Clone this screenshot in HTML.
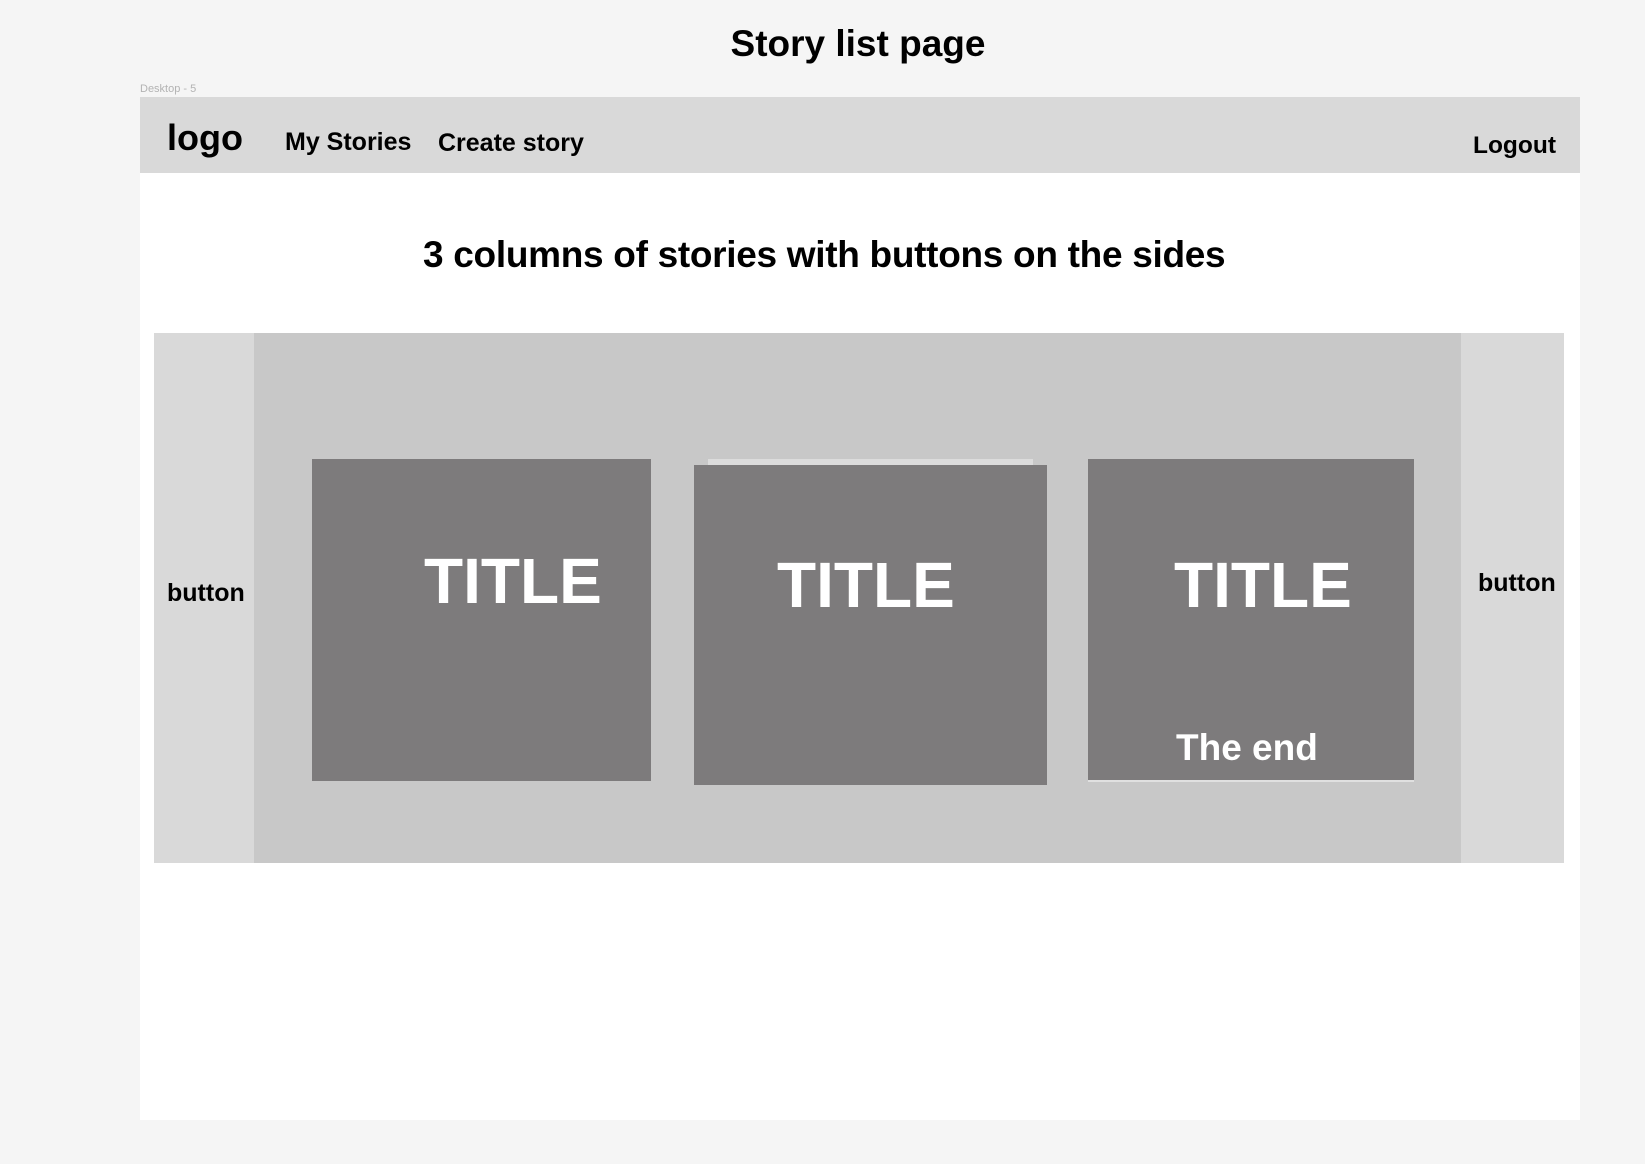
<!DOCTYPE html>
<html><head><meta charset="utf-8"><style>
body{margin:0;width:1645px;height:1164px;background:#f5f5f5;position:relative;overflow:hidden;font-family:"Liberation Sans",Arial,sans-serif;font-weight:bold;color:#000}
div{position:absolute}
.t{white-space:nowrap;line-height:1}
</style></head><body>
<div class="t" style="left:0;width:1716px;text-align:center;top:25px;font-size:37px">Story list page</div>
<div class="t" style="left:140px;top:84px;font-size:11px;font-weight:normal;color:#b3b3b3">Desktop - 5</div>
<div style="left:140px;top:97px;width:1440px;height:1023px;background:#fff"></div>
<div style="left:140px;top:97px;width:1440px;height:76px;background:#d9d9d9"></div>
<div class="t" style="left:167px;top:120px;font-size:36px">logo</div>
<div class="t" style="left:285px;top:130px;font-size:25px">My Stories</div>
<div class="t" style="left:438px;top:131px;font-size:25px">Create story</div>
<div class="t" style="left:1473px;top:134px;font-size:24.5px">Logout</div>
<div class="t" style="left:423px;top:236px;font-size:37px;letter-spacing:-0.3px">3 columns of stories with buttons on the sides</div>
<div style="left:154px;top:333px;width:1410px;height:530px;background:#d9d9d9"></div>
<div style="left:254px;top:333px;width:1207px;height:530px;background:#c8c8c8"></div>
<div class="t" style="left:167px;top:581px;font-size:25px">button</div>
<div class="t" style="left:1478px;top:571px;font-size:25px">button</div>
<div style="left:312px;top:459px;width:339px;height:322px;background:#7d7b7c"></div>
<div style="left:708px;top:459px;width:325px;height:6px;background:#dcdcdc"></div>
<div style="left:694px;top:465px;width:353px;height:320px;background:#7d7b7c"></div>
<div style="left:1088px;top:459px;width:326px;height:321px;background:#7d7b7c;border-bottom:2px solid #e0e0e0"></div>
<div class="t" style="left:424px;top:549px;font-size:64px;color:#fff">TITLE</div>
<div class="t" style="left:777px;top:553px;font-size:64px;color:#fff">TITLE</div>
<div class="t" style="left:1174px;top:553px;font-size:64px;color:#fff">TITLE</div>
<div class="t" style="left:1176px;top:729px;font-size:37px;color:#fff">The end</div>
</body></html>
